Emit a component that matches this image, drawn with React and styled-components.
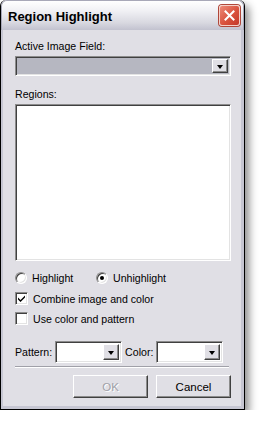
import React from "react";
import styled, { createGlobalStyle } from "styled-components";

const Global = createGlobalStyle`
  body {
    margin: 0;
    background: #ffffff;
    font-family: "Liberation Sans", Arial, sans-serif;
  }
`;

const Window = styled.div`
  width: 245px;
  height: 410px;
  box-sizing: border-box;
  border: 1px solid #000000;
  border-top: none;
  border-radius: 6px 6px 0 0;
  background: #e0dfe5;
  box-shadow: 4px 5px 8px rgba(0, 0, 0, 0.45);
  display: flex;
  flex-direction: column;
  overflow: hidden;
`;

const TitleBar = styled.div`
  height: 29px;
  flex: none;
  display: flex;
  align-items: center;
  justify-content: space-between;
  padding: 0 3px 0 6px;
  background: linear-gradient(#ffffff 0%, #f0f0f4 35%, #d8d8e0 75%, #c2c2cf 100%);
  border: 1px solid #a8a8b8;
  border-bottom: none;
  border-radius: 6px 6px 0 0;
`;

const Title = styled.span`
  font-family: "Liberation Sans", Arial, sans-serif;
  font-weight: bold;
  font-size: 13px;
  color: #000000;
  margin-top: 1px;
`;

const CloseButton = styled.div`
  width: 21px;
  height: 21px;
  border-radius: 3px;
  border: 1px solid #f4d0c8;
  background: linear-gradient(135deg, #ec8a78 0%, #d9523e 55%, #c4392a 100%);
  box-shadow: 0 0 0 1px #b0473a;
  display: flex;
  align-items: center;
  justify-content: center;
  box-sizing: border-box;
`;

const Frame = styled.div`
  flex: 1;
  border: 3px solid #c6c6d2;
  border-top: none;
  border-left-width: 2px;
  display: flex;
  flex-direction: column;
  padding: 9px 10px 0 12px;
  font-family: "Liberation Sans", Arial, sans-serif;
  font-size: 10.6px;
  color: #000000;
`;

const Label = styled.div`
  height: 14px;
  line-height: 14px;
  margin-top: ${(p) => p.$top || 0}px;
`;

const Sunken = styled.div`
  box-sizing: border-box;
  border-top: 1px solid #8c8c8c;
  border-left: 1px solid #8c8c8c;
  border-right: 1px solid #ffffff;
  border-bottom: 1px solid #ffffff;
  background: ${(p) => (p.$disabled ? "#b6b7c1" : "#ffffff")};
  box-shadow: inset 1px 1px 0 #404040, inset -1px -1px 0 #e3e3e3;
`;

const Combo = styled(Sunken)`
  width: ${(p) => p.$w}px;
  height: ${(p) => p.$h || 20}px;
  display: flex;
  justify-content: flex-end;
  padding: 2px;
  margin-top: ${(p) => p.$top || 0}px;
`;

const DropButton = styled.div`
  width: 16px;
  height: 100%;
  box-sizing: border-box;
  background: #e0dfe5;
  border-top: 1px solid #ffffff;
  border-left: 1px solid #ffffff;
  border-right: 1px solid #404040;
  border-bottom: 1px solid #404040;
  box-shadow: inset -1px -1px 0 #8c8c8c;
  display: flex;
  align-items: center;
  justify-content: center;
`;

const Arrow = styled.div`
  width: 0;
  height: 0;
  border-left: 3.5px solid transparent;
  border-right: 3.5px solid transparent;
  border-top: 4px solid #000000;
  margin-top: 1px;
`;

const ListBox = styled(Sunken)`
  width: 216px;
  height: 157px;
  margin-top: 3px;
`;

const Row = styled.div`
  display: flex;
  align-items: center;
  margin-top: ${(p) => p.$top || 0}px;
  height: ${(p) => p.$h || 13}px;
`;

const Option = styled.label`
  display: flex;
  align-items: center;
  gap: 5px;
  width: ${(p) => (p.$w ? `${p.$w}px` : "auto")};
`;

const Radio = styled.span`
  width: 12px;
  height: 12px;
  border-radius: 50%;
  box-sizing: border-box;
  background: #ffffff;
  border: 1px solid;
  border-color: #8c8c8c #ffffff #ffffff #8c8c8c;
  box-shadow: inset 1px 1px 0 #404040, inset -1px -1px 0 #e3e3e3;
  display: flex;
  align-items: center;
  justify-content: center;
  &::after {
    content: "";
    width: 4px;
    height: 4px;
    border-radius: 50%;
    background: ${(p) => (p.$on ? "#000000" : "transparent")};
  }
`;

const Check = styled.span`
  width: 13px;
  height: 13px;
  box-sizing: border-box;
  background: #ffffff;
  border: 1px solid;
  border-color: #8c8c8c #ffffff #ffffff #8c8c8c;
  box-shadow: inset 1px 1px 0 #404040, inset -1px -1px 0 #e3e3e3;
  display: flex;
  align-items: center;
  justify-content: center;
`;

const Separator = styled.div`
  width: 214px;
  height: 0;
  border-top: 1px solid #a0a0a8;
  border-bottom: 1px solid #ffffff;
  margin-top: 3px;
`;

const Buttons = styled.div`
  display: flex;
  justify-content: flex-end;
  gap: 8px;
  margin-top: 7px;
`;

const Button = styled.div`
  width: 75px;
  height: 23px;
  box-sizing: border-box;
  display: flex;
  align-items: center;
  justify-content: center;
  background: #e0dfe5;
  color: ${(p) => (p.$disabled ? "#a0a0a8" : "#000000")};
  text-shadow: ${(p) => (p.$disabled ? "1px 1px 0 #ffffff" : "none")};
  border: 1px solid;
  border-color: #ffffff #404040 #404040 #ffffff;
  box-shadow: inset -1px -1px 0 #8c8c8c;
  font-size: 11.5px;
`;

const FieldLabel = styled.span`
  margin: 0 3px 0 ${(p) => p.$left || 0}px;
`;

export default function App() {
  return (
    <>
      <Global />
      <Window>
        <TitleBar>
          <Title>Region Highlight</Title>
          <CloseButton>
            <svg width="11" height="11" viewBox="0 0 11 11">
              <path d="M1.5 1.5 L9.5 9.5 M9.5 1.5 L1.5 9.5" stroke="#ffffff" strokeWidth="2" strokeLinecap="square" />
            </svg>
          </CloseButton>
        </TitleBar>
        <Frame>
          <Label>Active Image Field:</Label>
          <Combo $w={216} $top={3} $disabled>
            <DropButton>
              <Arrow />
            </DropButton>
          </Combo>
          <Label $top={11}>Regions:</Label>
          <ListBox />
          <Row $top={10}>
            <Option $w={81}>
              <Radio />
              Highlight
            </Option>
            <Option>
              <Radio $on />
              Unhighlight
            </Option>
          </Row>
          <Row $top={8}>
            <Option>
              <Check>
                <svg width="9" height="9" viewBox="0 0 9 9">
                  <path d="M1 3.5 L3.5 6 L8 1.5 L8 3.5 L3.5 8 L1 5.5 Z" fill="#000000" />
                </svg>
              </Check>
              Combine image and color
            </Option>
          </Row>
          <Row $top={7}>
            <Option>
              <Check />
              Use color and pattern
            </Option>
          </Row>
          <Row $top={16} $h={22}>
            <FieldLabel>Pattern:</FieldLabel>
            <Combo $w={67} $h={22}>
              <DropButton>
                <Arrow />
              </DropButton>
            </Combo>
            <FieldLabel $left={3}>Color:</FieldLabel>
            <Combo $w={67} $h={22}>
              <DropButton>
                <Arrow />
              </DropButton>
            </Combo>
          </Row>
          <Separator />
          <Buttons>
            <Button $disabled>OK</Button>
            <Button>Cancel</Button>
          </Buttons>
        </Frame>
      </Window>
    </>
  );
}
